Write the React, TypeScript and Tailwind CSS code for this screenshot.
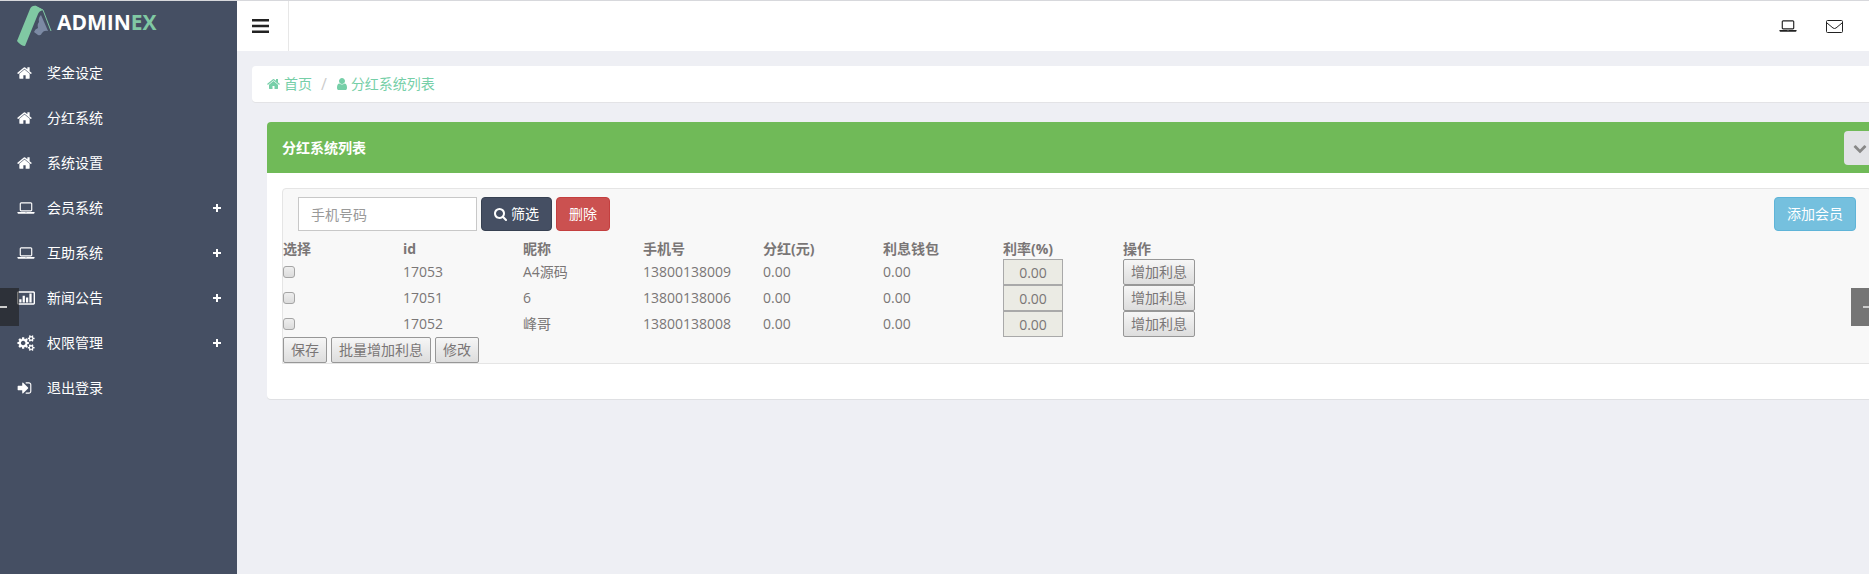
import { useState } from "react";

type IconProps = { className?: string; viewBox?: string; d: string };

const Icon = ({ className, viewBox = "0 0 1792 1792", d }: IconProps) => (
  <svg className={className} viewBox={viewBox} fill="currentColor" aria-hidden="true">
    <path fillRule="evenodd" d={d} />
  </svg>
);

const paths = {
  home: "M1472 992v480q0 26-19 45t-45 19h-384v-384h-256v384h-384q-26 0-45-19t-19-45v-480q0-1 .5-3t.5-3l575-474 575 474q1 2 1 6zm223-69l-62 74q-8 9-21 11h-3q-13 0-21-7l-692-577-692 577q-12 8-24 7-13-2-21-11l-62-74q-8-10-7-23.5t11-21.5l719-599q32-26 76-26t76 26l244 204v-195q0-14 9-23t23-9h192q14 0 23 9t9 23v408l219 182q10 8 11 21.5t-7 23.5z",
  laptop:
    "M416 1280q-66 0-113-47t-47-113v-704q0-66 47-113t113-47h1088q66 0 113 47t47 113v704q0 66-47 113t-113 47h-1088zm-32-864v704q0 13 9.5 22.5t22.5 9.5h1088q13 0 22.5-9.5t9.5-22.5v-704q0-13-9.5-22.5t-22.5-9.5h-1088q-13 0-22.5 9.5t-9.5 22.5zm1376 928h160v96q0 40-47 68t-113 28h-1600q-66 0-113-28t-47-68v-96h1760zm-720 96q16 0 16-16t-16-16h-160q-16 0-16 16t16 16h160z",
  chart:
    "M160 128h1728q66 0 113 47t47 113v1216q0 66-47 113t-113 47h-1728q-66 0-113-47t-47-113v-1216q0-66 47-113t113-47zm32 160q-32 0-32 32v1152q0 32 32 32h1664q32 0 32-32v-1152q0-32-32-32zM256 1024h256v384h-256zM640 640h256v768h-256zM1024 832h256v576h-256zM1408 384h256v1024h-256z",
  cogs: "M896 896q0-106-75-181t-181-75-181 75-75 181 75 181 181 75 181-75 75-181zm768 512q0-52-38-90t-90-38-90 38-38 90q0 53 37.5 90.5t90.5 37.5 90.5-37.5 37.5-90.5zm0-1024q0-52-38-90t-90-38-90 38-38 90q0 53 37.5 90.5t90.5 37.5 90.5-37.5 37.5-90.5zm-384 421v185q0 10-7 19.5t-16 10.5l-155 24q-11 35-32 76 34 48 90 115 7 11 7 20 0 12-7 19-23 30-82.5 89.5t-78.5 59.5q-11 0-21-7l-115-90q-37 19-77 31-11 108-23 155-7 24-30 24h-186q-11 0-20-7.5t-10-17.5l-23-153q-34-10-75-31l-118 89q-7 7-20 7-11 0-21-8-144-133-144-160 0-9 7-19 10-14 41-53t47-61q-23-44-35-82l-152-24q-10-1-17-9.5t-7-19.5v-185q0-10 7-19.5t16-10.5l155-24q11-35 32-76-34-48-90-115-7-11-7-20 0-12 7-20 22-30 82-89t79-59q11 0 21 7l115 90q34-18 77-32 11-108 23-154 7-24 30-24h186q11 0 20 7.5t10 17.5l23 153q34 10 75 31l118-89q8-7 20-7 11 0 21 8 144 133 144 160 0 8-7 19-12 16-42 54t-45 60q23 48 34 82l152 23q10 2 17 10.5t7 19.5zm640 533v140q0 16-149 31-12 27-30 52 51 113 51 138 0 4-4 7-122 71-124 71-8 0-46-47t-52-68q-20 2-30 2t-30-2q-14 21-52 68t-46 47q-2 0-124-71-4-3-4-7 0-25 51-138-18-25-30-52-149-15-149-31v-140q0-16 149-31 13-29 30-52-51-113-51-138 0-4 4-7 4-2 35-20t59-34 30-16q8 0 46 46.5t52 67.5q20-2 30-2t30 2q51-71 92-112l6-2q4 0 124 70 4 3 4 7 0 25-51 138 17 23 30 52 149 15 149 31zm0-1024v140q0 16-149 31-12 27-30 52 51 113 51 138 0 4-4 7-122 71-124 71-8 0-46-47t-52-68q-20 2-30 2t-30-2q-14 21-52 68t-46 47q-2 0-124-71-4-3-4-7 0-25 51-138-18-25-30-52-149-15-149-31v-140q0-16 149-31 13-29 30-52-51-113-51-138 0-4 4-7 4-2 35-20t59-34 30-16q8 0 46 46.5t52 67.5q20-2 30-2t30 2q51-71 92-112l6-2q4 0 124 70 4 3 4 7 0 25-51 138 17 23 30 52 149 15 149 31z",
  signIn:
    "M1312 896q0 26-19 45l-544 544q-19 19-45 19t-45-19-19-45v-288h-448q-26 0-45-19t-19-45v-384q0-26 19-45t45-19h448v-288q0-26 19-45t45-19 45 19l544 544q19 19 19 45zm352-352v704q0 119-84.5 203.5t-203.5 84.5h-320q-13 0-22.5-9.5t-9.5-22.5q0-4-1-20t-.5-26.5 3-23.5 10-19.5 20.5-6.5h320q66 0 113-47t47-113v-704q0-66-47-113t-113-47h-312l-11.5-1-11.5-3-8-5.5-7-9-2-13.5q0-4-1-20t-.5-26.5 3-23.5 10-19.5 20.5-6.5h320q119 0 203.5 84.5t84.5 203.5z",
  search:
    "M1216 832q0-185-131.5-316.5t-316.5-131.5-316.5 131.5-131.5 316.5 131.5 316.5 316.5 131.5 316.5-131.5 131.5-316.5zm512 832q0 52-38 90t-90 38q-54 0-90-38l-343-342q-179 124-399 124-143 0-273.5-55.5t-225-150-150-225-55.5-273.5 55.5-273.5 150-225 225-150 273.5-55.5 273.5 55.5 225 150 150 225 55.5 273.5q0 220-124 399l343 343q37 37 37 90z",
  user: "M1536 1399q0 109-62.5 187t-150.5 78h-854q-88 0-150.5-78t-62.5-187q0-85 8.5-160.5t31.5-152 58.5-131 94-89 134.5-34.5q131 128 313 128t313-128q76 0 134.5 34.5t94 89 58.5 131 31.5 152 8.5 160.5zm-256-887q0 159-112.5 271.5t-271.5 112.5-271.5-112.5-112.5-271.5 112.5-271.5 271.5-112.5 271.5 112.5 112.5 271.5z",
  chevronDown:
    "M1683 808l-742 741q-19 19-45 19t-45-19l-742-741q-19-19-19-45.5t19-45.5l166-165q19-19 45-19t45 19l531 531 531-531q19-19 45-19t45 19l166 165q19 19 19 45.5t-19 45.5z",
};

const menu = [
  { label: "奖金设定", d: paths.home, viewBox: "64 0 1664 1792", size: "w-[15px]", sub: false },
  { label: "分红系统", d: paths.home, viewBox: "64 0 1664 1792", size: "w-[15px]", sub: false },
  { label: "系统设置", d: paths.home, viewBox: "64 0 1664 1792", size: "w-[15px]", sub: false },
  { label: "会员系统", d: paths.laptop, viewBox: "0 0 1920 1792", size: "w-[18px]", sub: true },
  { label: "互助系统", d: paths.laptop, viewBox: "0 0 1920 1792", size: "w-[18px]", sub: true },
  { label: "新闻公告", d: paths.chart, viewBox: "0 0 2048 1792", size: "w-[18px]", sub: true },
  { label: "权限管理", d: paths.cogs, viewBox: "0 0 1920 1792", size: "w-[18px]", sub: true },
  { label: "退出登录", d: paths.signIn, viewBox: "128 0 1536 1792", size: "w-[15px]", sub: false },
];

const columns = ["选择", "id", "昵称", "手机号", "分红(元)", "利息钱包", "利率(%)", "操作"];

const members = [
  { id: "17053", name: "A4源码", phone: "13800138009", bonus: "0.00", wallet: "0.00", rate: "0.00" },
  { id: "17051", name: "6", phone: "13800138006", bonus: "0.00", wallet: "0.00", rate: "0.00" },
  { id: "17052", name: "峰哥", phone: "13800138008", bonus: "0.00", wallet: "0.00", rate: "0.00" },
];

const plainButton =
  "h-[26px] border border-[#979797] rounded-[2px] bg-linear-to-b from-[#f6f6f6] to-[#dddddd] px-[7px] leading-5 whitespace-nowrap";

const Logo = () => (
  <a href="#" className="flex h-[49px] items-start pl-[17px] pt-1" aria-label="AdminEx">
    <svg className="h-[42px] w-[36px]" viewBox="0 0 36 42" aria-hidden="true">
      <path d="M24 10L31 26Q27 25 25 28Q24 31 21 30L17 27Q18 24 21 23Q20 19 22 17Q21 13 24 10Z" fill="#7c8aa4" />
      <path d="M0 36L13 4Q15 0 19 1L26 5Q22 6 21 9L8 41Q4 41 0 36Z" fill="#80c9a3" />
      <path d="M18 1L26 5L34 26" fill="none" stroke="#80c9a3" strokeWidth="1" />
    </svg>
    <span className="pl-1 pt-[3px] text-[21px] leading-7 font-bold text-white">
      ADMIN<span className="text-[#80c9a3]">EX</span>
    </span>
  </a>
);

const Sidebar = () => (
  <aside className="w-[237px] shrink-0 bg-[#454f63] text-white">
    <Logo />
    <nav>
      <ul>
        {menu.map((item) => (
          <li key={item.label}>
            <a href="#" className="flex h-[45px] items-center pr-4 pl-[17px]">
              <span className="w-[30px]">
                <Icon className={`h-4 ${item.size}`} viewBox={item.viewBox} d={item.d} />
              </span>
              <span className="flex-1">{item.label}</span>
              {item.sub && (
                <svg className="h-2 w-2" viewBox="0 0 8 8" fill="currentColor" aria-hidden="true">
                  <path d="M3 0h2v3h3v2h-3v3h-2v-3h-3v-2h3z" />
                </svg>
              )}
            </a>
          </li>
        ))}
      </ul>
    </nav>
  </aside>
);

const Topbar = () => (
  <header className="flex h-[50px] items-center justify-between bg-white text-[#222]">
    <button
      type="button"
      aria-label="菜单"
      className="flex h-full w-[52px] items-center border-r border-[#e7e7e7] pl-[15px]"
    >
      <svg className="h-[14px] w-[17px]" viewBox="0 0 17 14" fill="currentColor" aria-hidden="true">
        <path d="M0 0h17v2.500h-17zM0 5.750h17v2.500h-17zM0 11.500h17v2.500h-17z" />
      </svg>
    </button>
    <div className="flex items-center gap-[29px] pr-[26px]">
      <a href="#" aria-label="电脑">
        <Icon className="h-4 w-[18px]" viewBox="0 0 1920 1792" d={paths.laptop} />
      </a>
      <a href="#" aria-label="邮件">
        <svg className="h-[13px] w-[17px]" viewBox="0 0 17 13" fill="none" stroke="currentColor" aria-hidden="true">
          <rect x="0.5" y="0.5" width="16" height="12" rx="1" />
          <path d="M1 3L7 8Q8.500 9 10 8L16 3" />
        </svg>
      </a>
    </div>
  </header>
);

const Breadcrumb = () => (
  <nav
    aria-label="breadcrumb"
    className="-mr-[18px] flex h-9 items-center rounded bg-white px-[15px] text-[#76cfa8] shadow-[0_1px_0_#e3e3e6]"
  >
    <a href="#" className="flex items-center gap-1">
      <Icon className="h-[14px] w-[13px]" viewBox="64 0 1664 1792" d={paths.home} />
      首页
    </a>
    <span className="px-[9px] text-base text-[#ccc]">/</span>
    <a href="#" className="flex items-center gap-[3px]">
      <Icon className="h-[14px] w-3" viewBox="192 0 1408 1792" d={paths.user} />
      分红系统列表
    </a>
  </nav>
);

const MemberTable = () => (
  <table className="w-[960px] table-fixed text-left">
    <thead>
      <tr className="h-5">
        {columns.map((column) => (
          <th key={column} className="p-0 leading-5 font-bold">
            {column}
          </th>
        ))}
      </tr>
    </thead>
    <tbody>
      {members.map((member) => (
        <tr key={member.id} className="h-[26px]">
          <td className="p-0">
            <input
              type="checkbox"
              aria-label={`选择 ${member.id}`}
              className="block h-3 w-3 appearance-none rounded-[3px] border border-[#a5a5a5] bg-linear-to-b from-[#eeeeee] to-[#dcdcdc] checked:bg-[#454f63]"
            />
          </td>
          <td className="p-0">{member.id}</td>
          <td className="p-0">{member.name}</td>
          <td className="p-0">{member.phone}</td>
          <td className="p-0">{member.bonus}</td>
          <td className="p-0">{member.wallet}</td>
          <td className="p-0">
            <input
              type="text"
              aria-label={`利率 ${member.id}`}
              defaultValue={member.rate}
              className="block h-[26px] w-[60px] border border-[#a9a9a9] bg-[#ebebe4] text-center"
            />
          </td>
          <td className="p-0">
            <button type="button" className={`block ${plainButton}`}>
              增加利息
            </button>
          </td>
        </tr>
      ))}
    </tbody>
  </table>
);

const Panel = () => {
  const [open, setOpen] = useState<boolean>(true);

  return (
    <section className="mt-5 -mr-[18px] ml-[15px] rounded bg-white shadow-[0_1px_0_#dfe0e3]">
      <header className="flex h-[51px] items-center justify-between rounded-t bg-[#70ba58] pr-[11px] pl-[15px] text-white">
        <h2 className="font-bold">分红系统列表</h2>
        <button
          type="button"
          aria-label="折叠"
          onClick={() => setOpen(!open)}
          className="flex h-[34px] w-8 items-center justify-center rounded bg-[#e2e3e7] text-[#888]"
        >
          <Icon className="h-[14px] w-[14px]" d={paths.chevronDown} />
        </button>
      </header>
      {open && (
        <div className="px-[15px] pt-[15px] pb-[35px]">
          <div className="rounded-t border border-[#e5e5e5] bg-[#f8f8f8]">
            <form className="flex gap-1 px-[15px] py-2" onSubmit={(e) => e.preventDefault()}>
              <input
                type="text"
                aria-label="手机号码"
                placeholder="手机号码"
                className="h-[34px] w-[179px] border border-[#c8c8c8] bg-white px-3 placeholder:text-[#999]"
              />
              <button
                type="submit"
                className="flex h-[34px] items-center gap-1 rounded border border-[#374152] bg-[#454f63] px-3 text-white"
              >
                <Icon className="h-[14px] w-[13px]" viewBox="64 0 1664 1792" d={paths.search} />
                筛选
              </button>
              <button
                type="button"
                className="h-[34px] rounded border border-[#c43f3f] bg-[#cb5150] px-3 text-white"
              >
                删除
              </button>
              <button
                type="button"
                className="ml-auto h-[34px] rounded border border-[#5fb4d8] bg-[#75c0de] px-3 text-white"
              >
                添加会员
              </button>
            </form>
            <MemberTable />
            <div className="flex gap-1">
              <button type="button" className={plainButton}>
                保存
              </button>
              <button type="button" className={plainButton}>
                批量增加利息
              </button>
              <button type="button" className={plainButton}>
                修改
              </button>
            </div>
          </div>
        </div>
      )}
    </section>
  );
};

export default function App() {
  return (
    <div className="relative flex min-h-screen overflow-hidden border-t border-[#d7d8dc] bg-[#eeeff4] font-['Open_Sans','Noto_Sans_CJK_SC',sans-serif] text-sm text-[#7a7676]">
      <Sidebar />
      <main className="min-w-0 flex-1">
        <Topbar />
        <div className="pt-[15px] pl-[15px]">
          <Breadcrumb />
          <Panel />
        </div>
      </main>
      {/* prev / next handles over the window edges */}
      <button
        type="button"
        aria-label="上一页"
        className="absolute top-1/2 left-0 flex h-[38px] w-[19px] items-center bg-[#1e1e1e]/60"
      >
        <span className="h-[2px] w-[7px] bg-[#ccc]" />
      </button>
      <button
        type="button"
        aria-label="下一页"
        className="absolute top-1/2 right-0 flex h-[38px] w-[18px] items-center justify-end bg-[#1e1e1e]/60"
      >
        <span className="h-[2px] w-[6px] bg-[#ccc]" />
      </button>
    </div>
  );
}
